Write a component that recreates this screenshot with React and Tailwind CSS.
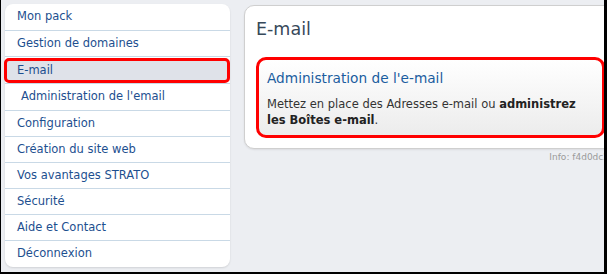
const navItems = [
  { label: "Mon pack", h: "h-[27px]" },
  { label: "Gestion de domaines", h: "h-[26px]" },
  { label: "E-mail", active: true, h: "h-[26px]" },
  { label: "Administration de l'email", sub: true, h: "h-[27px]" },
  { label: "Configuration", h: "h-[26px]" },
  { label: "Création du site web", h: "h-[26px]" },
  { label: "Vos avantages STRATO", h: "h-[26px]" },
  { label: "Sécurité", h: "h-[26px]" },
  { label: "Aide et Contact", h: "h-[26px]" },
  { label: "Déconnexion", h: "h-[26px]" },
];

const App = () => {
  return (
    <div className="h-[274px] w-[607px] overflow-hidden border-l border-r-[3px] border-b-2 border-black bg-[#eceef2] font-['DejaVu_Sans',sans-serif]">
      <div className="flex gap-[14px] pl-1 pt-1">
        {/* Sidebar */}
        <nav className="w-[225px] shrink-0 rounded-lg bg-white shadow-[0_1px_2px_rgba(0,0,0,0.12)]">
          {navItems.map((item, index) => {
            const last = index === navItems.length - 1;
            if (item.active) {
              return (
                <div key={index} className="border-b border-[#c9d9e6] pt-px">
                  <div className="-ml-px flex h-[25px] items-center rounded-[5px] border-[3px] border-[#f00] bg-[#dfe2e9] pl-[10px] text-[11.5px] text-[#1d4f8f]">
                    {item.label}
                  </div>
                </div>
              );
            }
            return (
              <div
                key={index}
                className={`flex items-center text-[11.5px] text-[#1d4f8f] ${item.h} ${
                  item.sub ? "pl-4" : "pl-3"
                } ${last ? "" : "border-b border-[#c9d9e6]"}`}
              >
                {item.label}
              </div>
            );
          })}
        </nav>

        {/* Main content */}
        <div className="w-[373px] shrink-0 pt-px">
          <div className="rounded-[10px] border border-[#cfcfcf] bg-white px-[11px] pb-[10px] pt-[11px] shadow-[0_1px_2px_rgba(0,0,0,0.08)]">
            <h1 className="h-6 text-[17.5px] leading-6 text-[#37495a]">E-mail</h1>
            <div className="mt-4 rounded-[10px] border-[3px] border-[#f00] bg-gradient-to-b from-white to-[#ececec] px-[8px] pb-[7px] pt-[9px]">
              <h2 className="text-[13.7px] leading-[18px] text-[#1a5d9f]">
                Administration de l'e-mail
              </h2>
              <p className="mt-[9px] text-[11.5px] leading-4 text-[#333]">
                Mettez en place des Adresses e-mail ou{" "}
                <b className="font-bold text-[#222]">administrez les Boîtes e-mail</b>.
              </p>
            </div>
          </div>
          <div className="mt-[2px] pr-[8px] text-right text-[9px] leading-3 text-[#9a9a9a]">
            Info: f4d0dc2
          </div>
        </div>
      </div>
    </div>
  );
};

export default App;
